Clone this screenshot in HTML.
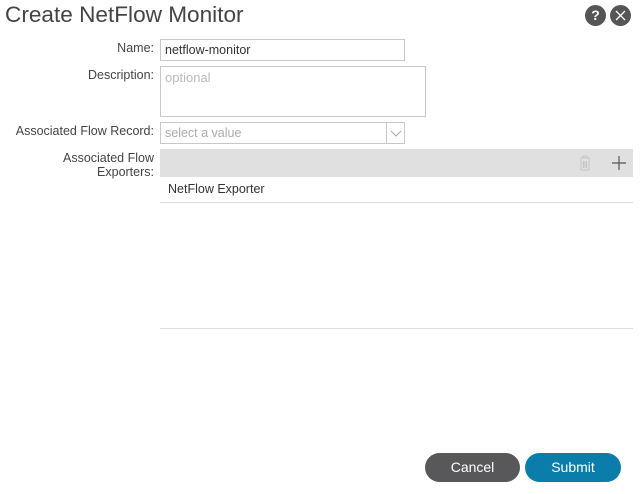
<!DOCTYPE html><html><head><style>
body{margin:0;width:641px;height:494px;background:#fff;font-family:"Liberation Sans",sans-serif;position:relative;overflow:hidden;color:#333}
.a{position:absolute}
.lbl{position:absolute;right:487px;font-size:12.5px;color:#444;text-align:right;line-height:14px}
.box{position:absolute;border:1px solid #c8c8c8;box-sizing:border-box;font-size:12.5px;padding:3px 4px}
.btn{position:absolute;top:453px;height:29px;border-radius:15px;color:#fff;font-size:14px;text-align:center;line-height:29px}
</style></head><body>
<div class="a" style="left:5px;top:2px;font-size:22.6px;color:#444">Create NetFlow Monitor</div>
<div class="a" style="left:585px;top:5px;width:21px;height:21px;border-radius:50%;background:#555;color:#fff;font-weight:bold;font-size:14px;text-align:center;line-height:21px">?</div>
<div class="a" style="left:610px;top:5px;width:21px;height:21px;border-radius:50%;background:#555"><svg width="21" height="21"><path d="M6 6L15 15M15 6L6 15" stroke="#fff" stroke-width="1.3"/></svg></div>
<div class="lbl" style="top:41px">Name:</div>
<div class="box" style="left:160px;top:39px;width:245px;height:22px;color:#333">netflow-monitor</div>
<div class="lbl" style="top:68px">Description:</div>
<div class="box" style="left:160px;top:66px;width:266px;height:51px;color:#bbb;font-size:13px">optional</div>
<div class="lbl" style="top:124px">Associated Flow Record:</div>
<div class="box" style="left:160px;top:122px;width:245px;height:22px;color:#aaa">select a value</div>
<div class="a" style="left:386px;top:123px;width:1px;height:20px;background:#c8c8c8"></div>
<svg class="a" style="left:389px;top:128px" width="14" height="10"><path d="M2 3L7 8L12 3" fill="none" stroke="#aaa"/></svg>
<div class="lbl" style="top:151px">Associated Flow<br>Exporters:</div>
<div class="a" style="left:160px;top:149px;width:473px;height:28px;background:#e0e0e0"></div>
<svg class="a" style="left:578px;top:155px" width="14" height="16"><path d="M2 3H12M5 3V1H9V3M3 4V15H11V4M5.5 6V13M7 6V13M8.5 6V13" fill="none" stroke="#c4c4c4"/></svg>
<svg class="a" style="left:611px;top:155px" width="16" height="16"><path d="M8 1V15M1 8H15" stroke="#555" stroke-width="1.2"/></svg>
<div class="a" style="left:168px;top:182px;font-size:12.5px;color:#333">NetFlow Exporter</div>
<div class="a" style="left:160px;top:202px;width:473px;height:1px;background:#ddd"></div>
<div class="a" style="left:160px;top:328px;width:473px;height:1px;background:#ddd"></div>
<div class="btn" style="left:425px;width:95px;background:#58585a">Cancel</div>
<div class="btn" style="left:525px;width:96px;background:#0b7dab">Submit</div>
</body></html>
